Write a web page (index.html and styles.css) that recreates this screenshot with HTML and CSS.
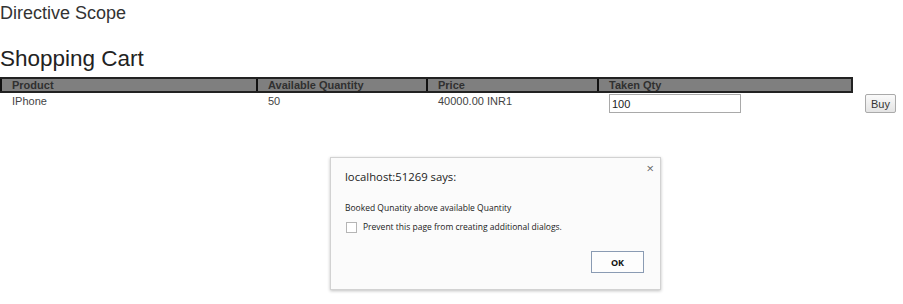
FILE: index.html
```html
<!DOCTYPE html>
<html>
<head>
<meta charset="utf-8">
<link rel="stylesheet" href="styles.css">
</head>
<body>
<div class="page">
  <div class="title">Directive Scope</div>
  <h1 class="heading">Shopping Cart</h1>
  <div class="cart">
    <div class="head">
      <div class="th c1">Product</div>
      <div class="th c2">Available Quantity</div>
      <div class="th c3">Price</div>
      <div class="th c4">Taken Qty</div>
    </div>
    <div class="row">
      <div class="td c1">IPhone</div>
      <div class="td c2">50</div>
      <div class="td c3">40000.00 INR1</div>
      <div class="td c4"><input class="qty" type="text" value="100"></div>
      <div class="td c5"><button class="buy">Buy</button></div>
    </div>
  </div>
</div>
<div class="dialog">
  <div class="close">×</div>
  <div class="dlg-title">localhost:51269 says:</div>
  <div class="dlg-msg">Booked Qunatity above available Quantity</div>
  <label class="dlg-check"><span class="box"></span>Prevent this page from creating additional dialogs.</label>
  <div class="dlg-actions"><button class="ok">OK</button></div>
</div>
</body>
</html>
```
FILE: styles.css
```css
html, body { margin: 0; padding: 0; background: #fff; }
body { font-family: "Liberation Sans", Arial, sans-serif; color: #333; width: 903px; height: 304px; overflow: hidden; position: relative; }
.page { padding: 3px 0 0 0; }
.title { font-size: 18px; line-height: 20px; color: #333; }
.heading { font-size: 22.5px; font-weight: normal; margin: 23px 0 0 0; line-height: 26px; color: #222; }
.cart { margin-top: 5px; }
.head { display: flex; width: 853px; height: 16px; background: #7f7f7f; border-top: 2px solid #222; border-bottom: 2px solid #222; box-sizing: border-box; }
.th { font-size: 11px; font-weight: bold; color: #303030; line-height: 13px; padding-left: 10px; box-sizing: border-box; border-left: 2px solid #111; }
.th.c4 { border-right: 2px solid #222; }
.c1 { width: 256px; }
.c2 { width: 170px; }
.c3 { width: 171px; }
.c4 { width: 256px; }
.c5 { padding-left: 11px; }
.row { display: flex; height: 22px; }
.td { font-size: 11px; line-height: 13px; color: #444; padding-left: 12px; box-sizing: border-box; padding-top: 2px; }
.td.c4, .td.c5 { padding-top: 1px; }
.qty { width: 132px; height: 19px; box-sizing: border-box; border: 1px solid #a9a9a9; font-family: "Liberation Sans", Arial, sans-serif; font-size: 11px; padding: 2px 2px; color: #222; }
.buy { height: 19px; width: 31px; font-family: "Liberation Sans", Arial, sans-serif; font-size: 11px; color: #333; background: linear-gradient(#fafafa, #e4e4e4); border: 1px solid #aaa; border-radius: 2px; padding: 0; margin: 0; }
.dialog { position: absolute; left: 330px; top: 157px; width: 331px; height: 133px; box-sizing: border-box; background: #fbfbfb; border: 1px solid #d2d2d2; box-shadow: 0 1px 3px rgba(0,0,0,0.25); font-family: "Open Sans", "Noto Sans", sans-serif; padding: 9px 14px 0 14px; }
.close { position: absolute; right: 6px; top: 1px; font-size: 13px; color: #666; }
.dlg-title { font-size: 11.3px; color: #222; line-height: 18px; margin-top: 1px; }
.dlg-msg { font-size: 8.5px; color: #222; margin-top: 15px; line-height: 14px; }
.dlg-check { display: flex; align-items: center; font-size: 8.5px; color: #222; margin-top: 5px; line-height: 14px; }
.box { width: 9px; height: 9px; border: 1px solid #b5b5b5; background: #fff; margin: 0 6px 0 1px; display: inline-block; }
.dlg-actions { display: flex; justify-content: flex-end; margin-top: 17px; padding-right: 2px; }
.ok { width: 53px; height: 22px; background: #fdfdfd; border: 1px solid #8a9bb3; font-family: "Open Sans", "Noto Sans", sans-serif; font-weight: bold; font-size: 9px; color: #111; padding: 0; }
```
